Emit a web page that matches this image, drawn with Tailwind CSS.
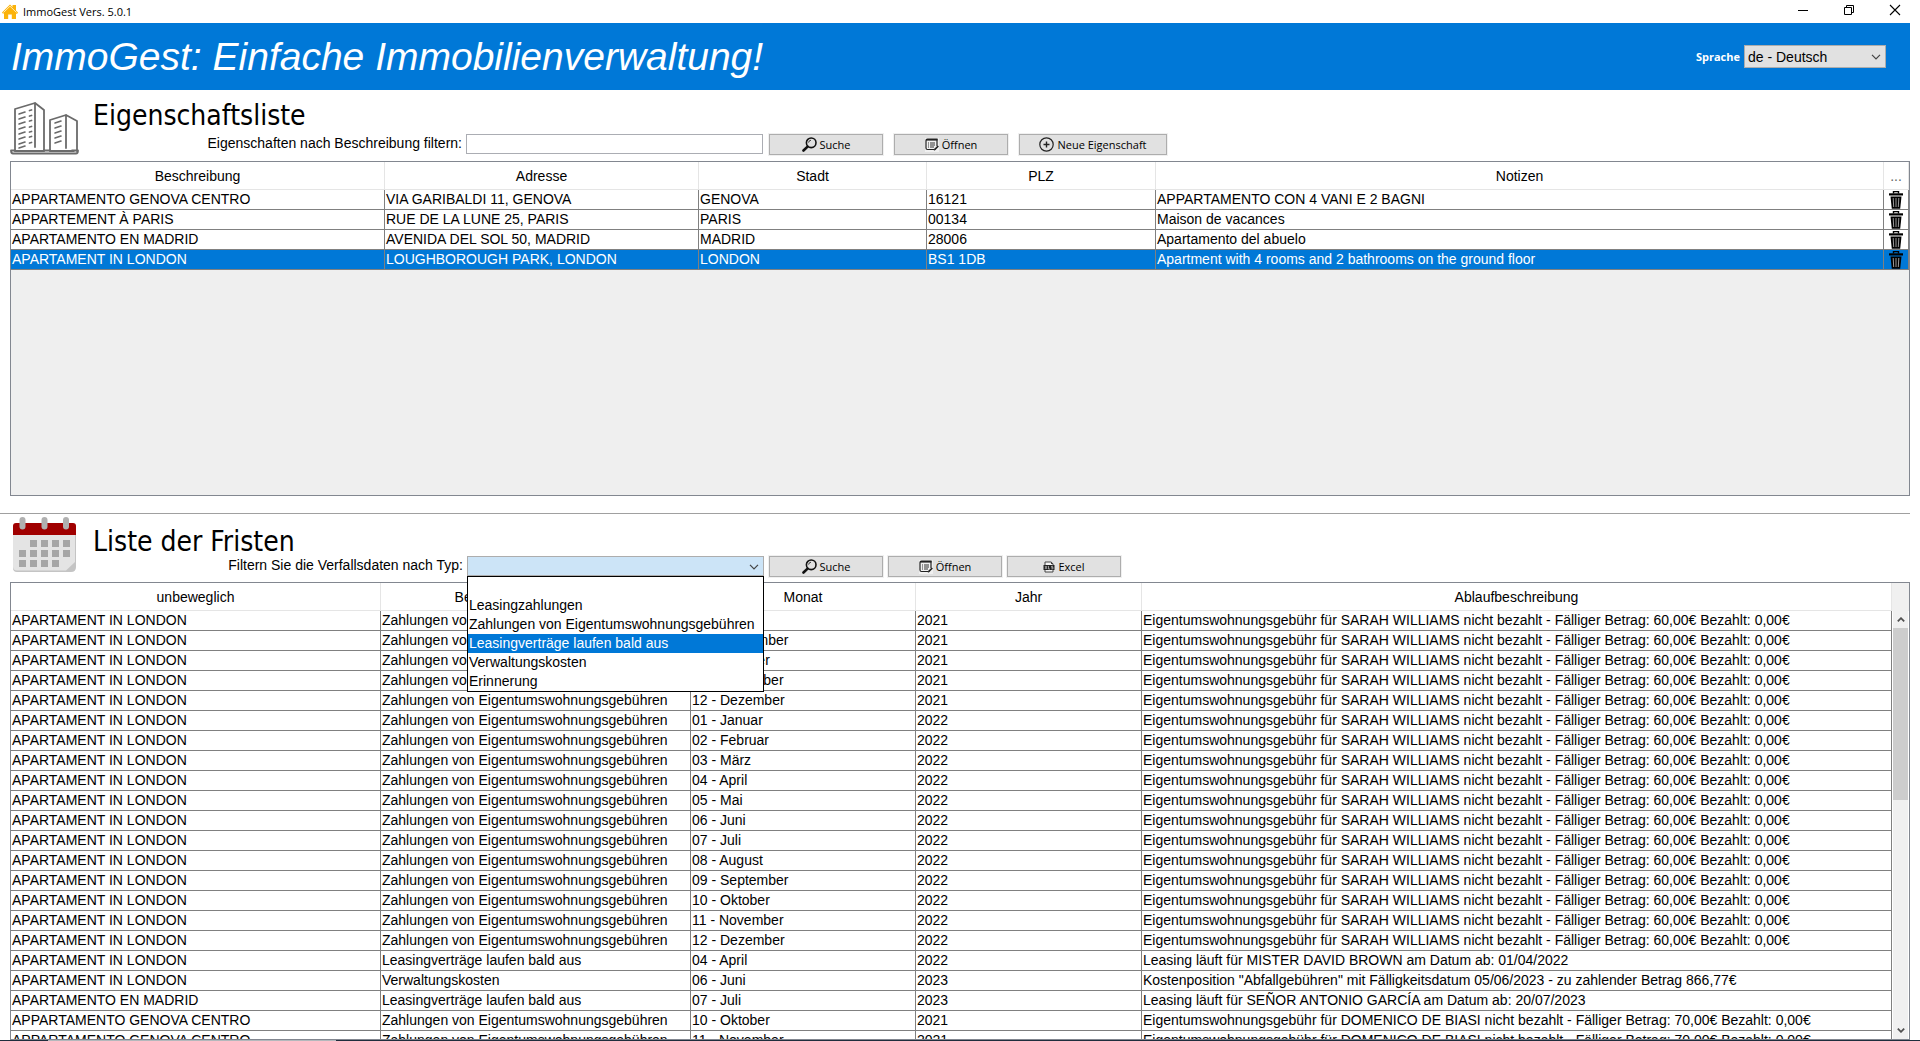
<!DOCTYPE html>
<html lang="de">
<head>
<meta charset="utf-8">
<title>ImmoGest Vers. 5.0.1</title>
<script src="https://cdn.jsdelivr.net/npm/@tailwindcss/browser@4"></script>
</head>
<body class="bg-white font-['Liberation_Sans',Arial,sans-serif] text-sm text-black">
<svg class="hidden" aria-hidden="true">
  <symbol id="i-search" viewBox="0 0 15 15"><circle cx="9.2" cy="5.8" r="4.8" fill="none" stroke="#111" stroke-width="1.6"/><path d="M6.6 5.6a2.6 2.6 0 0 1 2.4-2.4" fill="none" stroke="#111" stroke-width=".8"/><path d="M5.600 9.600L1.500 13.500" stroke="#111" stroke-width="2.600" stroke-linecap="round"/></symbol>
  <symbol id="i-open" viewBox="0 0 14 14"><rect width="14" height="14" fill="#f0f0f0"/><path d="M9.5 11.5H2.5a1.5 1.5 0 0 1-1.5-1.500V2.500A1.500 1.500 0 0 1 2.500 1H12v7" fill="none" stroke="#222" stroke-width="1.200"/><path d="M1 1.800H12.500" stroke="#222" stroke-width="1.600"/><path d="M3 5h1M5 5h5M3 7h1M5 7h5M3 9h1M5 9h4" stroke="#333" stroke-width="1"/><path d="M8.800 12.800l.5-2 3.400-3.400 1.200 1.200-3.400 3.400z" fill="#222"/></symbol>
  <symbol id="i-add" viewBox="0 0 15 15"><circle cx="7.500" cy="7.500" r="6.700" fill="none" stroke="#222" stroke-width="1.200"/><path d="M7.500 4.500v6M4.500 7.500h6" stroke="#222" stroke-width="1.400"/></symbol>
  <symbol id="i-xls" viewBox="0 0 12 12"><path d="M2 4V1h6l2 2v1M2 9v2h8V9" fill="#f4f4f4" stroke="#444" stroke-width="1"/><path d="M8 .5V3h2.500z" fill="#444"/><rect x=".5" y="4" width="11" height="5" fill="#222"/><path d="M2 5l2 3M4 5L2 8M5.500 5v3H7M10 5.300H8.500v1H10V7.800H8.300" fill="none" stroke="#ccc" stroke-width=".7"/></symbol>
  <symbol id="i-chevron" viewBox="0 0 10 6"><path d="M1 .8l4 4 4-4" fill="none" stroke="#444" stroke-width="1.200"/></symbol>
  <symbol id="i-trash" viewBox="0 0 14 18"><path d="M4.500 2.500V.5h5v2" fill="none" stroke="#000" stroke-width="1.400"/><rect y="2.300" width="14" height="2.200" fill="#000"/><path d="M1.500 5.500h11l-1.300 12.300H2.800z" fill="#000"/><path d="M4.200 7l.5 9M7 7v9M9.800 7l-.5 9" stroke="#9a9a9a" stroke-width="1"/></symbol>
</svg>
<div class="flex h-screen flex-col overflow-hidden">
  <div class="flex h-[23px] shrink-0 items-center pl-0.5">
    <svg class="h-4 w-4" viewBox="0 0 16 16"><path d="M0 8.500L8 0.500l2.500 2.500V1H14v5.500l2 2-.8 1.200H14V15H9.800v-4.500H6.200V15H2V9.500H.7z" fill="#fbb30b"/><path d="M1.500 8.500L8 2.200l6.500 6.300" stroke="#fff" stroke-width=".7" fill="none"/></svg>
    <h1 class="ml-[5px] text-[11px] font-['Open_Sans',sans-serif]">ImmoGest Vers. 5.0.1</h1>
    <div class="mr-[19px] ml-auto flex items-center gap-[34px] pb-1">
      <button aria-label="Minimieren"><svg class="h-3 w-3" viewBox="0 0 12 12"><path d="M1 6.500h10" stroke="#000"/></svg></button>
      <button aria-label="Wiederherstellen"><svg class="h-3 w-3" viewBox="0 0 12 12" fill="none" stroke="#000"><path d="M1.500 3.500h7v7h-7zM3.500 3.500v-2h7v7h-2"/></svg></button>
      <button aria-label="Schließen"><svg class="h-3 w-3" viewBox="0 0 12 12"><path d="M1 1l10 10M11 1L1 11" stroke="#000" stroke-width="1.100"/></svg></button>
    </div>
  </div>

  <header class="mr-2.5 flex h-[67px] shrink-0 items-center justify-between bg-[#0078d7] pr-6 pl-[11px] text-white">
    <p class="text-[39px] leading-none italic">ImmoGest: Einfache Immobilienverwaltung!</p>
    <div class="flex items-center gap-1">
      <label for="lang" class="text-[11px] font-bold font-['Open_Sans',sans-serif]">Sprache</label>
      <div class="relative">
        <select id="lang" class="block h-[23px] w-[142px] appearance-none border border-[#adadad] bg-[#e1e1e1] pl-[3px] text-sm leading-5 text-black"><option>de - Deutsch</option></select>
        <svg class="pointer-events-none absolute top-[9px] right-[5px] h-1.5 w-2.5"><use href="#i-chevron"/></svg>
      </div>
    </div>
  </header>

  <section class="mr-2.5 h-[423px] shrink-0 pl-2.5">
    <div class="flex h-[71px]">
      <svg class="mt-3 h-[53px] w-[69px] shrink-0" viewBox="0 0 69 53" fill="none" stroke="#6b6b6b" stroke-width="1.800" stroke-linejoin="round" stroke-linecap="round"><path d="M5 49V7L25 1l9 7v41M25 1v44M40 49V18l16-5 11 6v30M56 13v33" /><path d="M1 48.500q0 3 2 3h63q2 0 2-3H62M1 48.500h4M34 48.500h6M5 49h29M40 49h24" /><path d="M9 12l6-2M9 17l6-2M9 22l6-2M9 27l6-2M9 32l6-2M9 37l6-2M9 42l6-2M9 46l6-2M45 21l6-2M45 26l6-2M45 31l6-2M45 36l6-2M45 41l6-2" stroke-width="1.600"/><path d="M19.500 8.500l2-.5M19.500 14l2-.5M19.500 19l2-.5M19.500 25l2-.5M19.500 30l2-.5M19.500 35l2-.5M19.500 41l2-.5" stroke-width="1.800"/></svg>
      <div class="ml-3.5 flex flex-col">
        <h2 class="mt-2 h-9 text-[28px] leading-9 font-['DejaVu_Sans_Condensed','DejaVu_Sans',sans-serif]">Eigenschaftsliste</h2>
        <form class="flex items-start">
          <label for="filter" class="w-[373px] pr-1 text-right leading-[19px]">Eigenschaften nach Beschreibung filtern:</label>
          <input id="filter" type="text" class="h-5 w-[297px] border border-[#abadb3] bg-white px-1">
          <div class="ml-1.5 flex gap-[11px] text-[11px] font-['Open_Sans',sans-serif]">
            <button type="button" class="flex h-[21px] w-[114px] items-center justify-center gap-[3px] border border-[#adadad] bg-[#e1e1e1] outline outline-[#f0f0f0]"><svg class="size-[15px]"><use href="#i-search"/></svg>Suche</button>
            <button type="button" class="flex h-[21px] w-[114px] items-center justify-center gap-[3px] border border-[#adadad] bg-[#e1e1e1] outline outline-[#f0f0f0]"><svg class="size-3.5"><use href="#i-open"/></svg>Öffnen</button>
            <button type="button" class="flex h-[21px] w-[148px] items-center justify-center gap-[3px] border border-[#adadad] bg-[#e1e1e1] outline outline-[#f0f0f0]"><svg class="size-[15px]"><use href="#i-add"/></svg>Neue Eigenschaft</button>
          </div>
        </form>
      </div>
    </div>
    <div class="h-[335px] overflow-hidden border border-[#828790] bg-[#efefef]">
      <table class="w-full table-fixed border-separate border-spacing-0 bg-white leading-[19px] whitespace-nowrap [&_td]:h-5 [&_td]:border-r [&_td]:border-b [&_td]:border-[#808080] [&_td]:pl-px [&_th]:h-7 [&_th]:border-r [&_th]:border-b [&_th]:border-[#e5e5e5] [&_th]:pt-0.5 [&_th]:font-normal">
        <colgroup><col class="w-[374px]"><col class="w-[314px]"><col class="w-[228px]"><col class="w-[229px]"><col><col class="w-[25px]"></colgroup>
        <thead><tr><th>Beschreibung</th><th>Adresse</th><th>Stadt</th><th>PLZ</th><th>Notizen</th><th class="text-[#666]">...</th></tr></thead>
        <tbody id="properties"></tbody>
      </table>
    </div>
  </section>

  <section class="mr-2.5 flex min-h-0 flex-1 flex-col border-t border-[#a0a0a0]">
    <div class="flex h-[68px] shrink-0 pl-2.5">
      <svg class="mt-0.5 h-[57px] w-[69px] shrink-0" viewBox="0 0 69 57"><path d="M3 10h63v41q0 5-5 5H7q-4 0-4-4z" fill="#c4c4c4"/><path d="M3 10h62v36l-9 8.500H7q-4 0-4-4z" fill="#e4e4e4"/><path d="M3 19v-9q0-3 3-3h57q3 0 3 3v9z" fill="#a00000"/><g fill="#b0b0b0"><rect x="9.500" y="1" width="6" height="12.500" rx="3"/><rect x="31.500" y="1" width="6" height="12.500" rx="3"/><rect x="53" y="1" width="6" height="12.500" rx="3"/></g><path d="M20 24h7v7h-7zM31 24h7v7h-7zM42 24h7v7h-7zM53 24h7v7h-7zM9 34h7v7H9zM20 34h7v7h-7zM31 34h7v7h-7zM42 34h7v7h-7zM53 34h7v7h-7zM9 44h7v7H9zM20 44h7v7h-7zM31 44h7v7h-7zM42 44h7v7h-7z" fill="#a6a6a6"/></svg>
      <div class="ml-3.5 flex flex-col">
        <h2 class="mt-2.5 h-8 text-[28px] leading-9 font-['DejaVu_Sans_Condensed','DejaVu_Sans',sans-serif]">Liste der Fristen</h2>
        <form class="flex items-start">
          <label for="type" class="w-[374px] pr-1 text-right leading-[19px]">Filtern Sie die Verfallsdaten nach Typ:</label>
          <div class="relative">
            <select id="type" class="block h-5 w-[297px] appearance-none border border-[#adadad] bg-[#cce4f7]"><option></option></select>
            <svg class="pointer-events-none absolute top-2 right-[5px] h-1.5 w-2.5"><use href="#i-chevron"/></svg>
            <ul role="listbox" aria-label="Typ" class="absolute top-full left-0 z-10 w-full border border-black bg-white leading-[19px] whitespace-nowrap *:h-[19px] *:pl-px">
              <li role="option"></li>
              <li role="option">Leasingzahlungen</li>
              <li role="option">Zahlungen von Eigentumswohnungsgebühren</li>
              <li role="option" aria-selected="true" class="bg-[#0078d7] text-white">Leasingverträge laufen bald aus</li>
              <li role="option">Verwaltungskosten</li>
              <li role="option">Erinnerung</li>
            </ul>
          </div>
          <div class="ml-[5px] flex gap-[5px] text-[11px] font-['Open_Sans',sans-serif]">
            <button type="button" class="flex h-[21px] w-[114px] items-center justify-center gap-[3px] border border-[#adadad] bg-[#e1e1e1] outline outline-[#f0f0f0]"><svg class="size-[15px]"><use href="#i-search"/></svg>Suche</button>
            <button type="button" class="flex h-[21px] w-[114px] items-center justify-center gap-[3px] border border-[#adadad] bg-[#e1e1e1] outline outline-[#f0f0f0]"><svg class="size-3.5"><use href="#i-open"/></svg>Öffnen</button>
            <button type="button" class="flex h-[21px] w-[114px] items-center justify-center gap-[3px] border border-[#adadad] bg-[#e1e1e1] outline outline-[#f0f0f0]"><svg class="size-3"><use href="#i-xls"/></svg>Excel</button>
          </div>
        </form>
      </div>
    </div>
    <div class="ml-2.5 flex min-h-0 flex-1 border border-[#828790]">
      <div class="min-w-0 flex-1 overflow-hidden">
        <table class="w-full table-fixed border-separate border-spacing-0 leading-[19px] whitespace-nowrap [&_td]:h-5 [&_td]:border-r [&_td]:border-b [&_td]:border-[#808080] [&_td]:pl-px [&_th]:h-7 [&_th]:border-r [&_th]:border-b [&_th]:border-[#e5e5e5] [&_th]:pt-0.5 [&_th]:font-normal">
          <colgroup><col class="w-[370px]"><col class="w-[310px]"><col class="w-[225px]"><col class="w-[226px]"><col></colgroup>
          <thead><tr><th>unbeweglich</th><th>Beschreibung des Ablaufs</th><th>Monat</th><th>Jahr</th><th>Ablaufbeschreibung</th></tr></thead>
          <tbody id="deadlines"></tbody>
        </table>
      </div>
      <div class="flex w-[17px] flex-col">
        <div class="h-7 shrink-0 bg-[#f0f0f0]"></div>
        <div class="mx-px flex flex-1 flex-col items-center bg-[#f0f0f0]">
          <svg class="my-1.5 h-[5px] w-2" viewBox="0 0 8 5"><path d="M.8 4.300L4 1.200l3.200 3.100" fill="none" stroke="#505050" stroke-width="1.800"/></svg>
          <div class="h-[172px] w-full bg-[#cdcdcd]"></div>
          <svg class="mt-auto mb-1.5 h-[5px] w-2" viewBox="0 0 8 5"><path d="M.8.700L4 3.800 7.200.7" fill="none" stroke="#505050" stroke-width="1.800"/></svg>
        </div>
      </div>
    </div>
  </section>
  <div class="flex h-px shrink-0 bg-[#1f2d3d]"><div class="ml-12 w-72 bg-[#b4b8bc]"></div></div>
</div>
<script>
const properties = [
  ['APPARTAMENTO GENOVA CENTRO', 'VIA GARIBALDI 11, GENOVA', 'GENOVA', '16121', 'APPARTAMENTO CON 4 VANI E 2 BAGNI'],
  ['APPARTEMENT À PARIS', 'RUE DE LA LUNE 25, PARIS', 'PARIS', '00134', 'Maison de vacances'],
  ['APARTAMENTO EN MADRID', 'AVENIDA DEL SOL 50, MADRID', 'MADRID', '28006', 'Apartamento del abuelo'],
  ['APARTAMENT IN LONDON', 'LOUGHBOROUGH PARK, LONDON', 'LONDON', 'BS1 1DB', 'Apartment with 4 rooms and 2 bathrooms on the ground floor'],
];
const months = ['Januar', 'Februar', 'März', 'April', 'Mai', 'Juni', 'Juli', 'August', 'September', 'Oktober', 'November', 'Dezember'];
const month = n => String(n).padStart(2, '0') + ' - ' + months[n - 1];
const fee = (name, amount) => 'Eigentumswohnungsgebühr für ' + name + ' nicht bezahlt - Fälliger Betrag: ' + amount + '€ Bezahlt: 0,00€';
const feeType = 'Zahlungen von Eigentumswohnungsgebühren';
const london = 'APARTAMENT IN LONDON';
const deadlines = [];
for (let m = 8; m <= 12; m++) deadlines.push([london, feeType, month(m), '2021', fee('SARAH WILLIAMS', '60,00')]);
for (let m = 1; m <= 12; m++) deadlines.push([london, feeType, month(m), '2022', fee('SARAH WILLIAMS', '60,00')]);
deadlines.push(
  [london, 'Leasingverträge laufen bald aus', month(4), '2022', 'Leasing läuft für MISTER DAVID BROWN am Datum ab: 01/04/2022'],
  [london, 'Verwaltungskosten', month(6), '2023', 'Kostenposition "Abfallgebühren" mit Fälligkeitsdatum 05/06/2023 - zu zahlender Betrag 866,77€'],
  ['APARTAMENTO EN MADRID', 'Leasingverträge laufen bald aus', month(7), '2023', 'Leasing läuft für SEÑOR ANTONIO GARCÍA am Datum ab: 20/07/2023'],
  ['APPARTAMENTO GENOVA CENTRO', feeType, month(10), '2021', fee('DOMENICO DE BIASI', '70,00')],
  ['APPARTAMENTO GENOVA CENTRO', feeType, month(11), '2021', fee('DOMENICO DE BIASI', '70,00')]
);
const cells = row => row.map(c => '<td>' + c + '</td>').join('');
document.getElementById('properties').innerHTML = properties.map((row, i) =>
  '<tr class="' + (i === 3 ? 'bg-[#0078d7] text-white' : 'bg-white') + '">' + cells(row) +
  '<td><button aria-label="Löschen" class="ml-1 block"><svg class="h-[18px] w-3.5"><use href="#i-trash"/></svg></button></td></tr>').join('');
document.getElementById('deadlines').innerHTML = deadlines.map(row => '<tr>' + cells(row) + '</tr>').join('');
</script>
</body>
</html>
